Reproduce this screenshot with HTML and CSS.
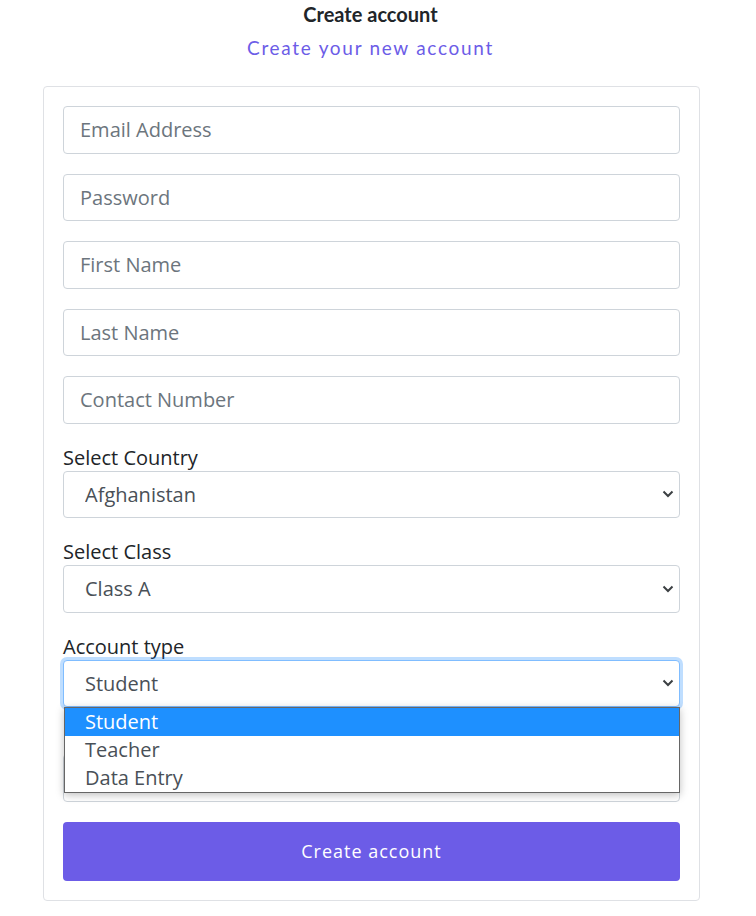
FILE: index.html
```html
<!DOCTYPE html>
<html lang="en">

<head>
    <meta charset="UTF-8">
    <meta name="viewport" content="width=device-width, initial-scale=1.0">
    <title>Create account</title>
    <link rel="stylesheet" href="styles.css">
</head>

<body>
    <div class="page">
        <h4 class="title">Create account</h4>
        <p class="subtitle">Create your new account</p>

        <form class="card">
            <input class="field" type="email" placeholder="Email Address">
            <input class="field" type="password" placeholder="Password">
            <input class="field" type="text" placeholder="First Name">
            <input class="field" type="text" placeholder="Last Name">
            <input class="field" type="text" placeholder="Contact Number">

            <div class="group">
                <label class="label">Select Country</label>
                <div class="select-wrap">
                    <select class="field select">
                        <option>Afghanistan</option>
                    </select>
                    <svg class="chevron" viewBox="0 0 12 8"><path d="M1.5 1.5l4.5 4.5 4.5-4.5" /></svg>
                </div>
            </div>

            <div class="group">
                <label class="label">Select Class</label>
                <div class="select-wrap">
                    <select class="field select">
                        <option>Class A</option>
                    </select>
                    <svg class="chevron" viewBox="0 0 12 8"><path d="M1.5 1.5l4.5 4.5 4.5-4.5" /></svg>
                </div>
            </div>

            <div class="group">
                <label class="label">Account type</label>
                <div class="select-wrap">
                    <select class="field select focus">
                        <option>Student</option>
                        <option>Teacher</option>
                        <option>Data Entry</option>
                    </select>
                    <svg class="chevron" viewBox="0 0 12 8"><path d="M1.5 1.5l4.5 4.5 4.5-4.5" /></svg>
                    <!-- open list of the select -->
                    <ul class="dropdown">
                        <li class="active">Student</li>
                        <li>Teacher</li>
                        <li>Data Entry</li>
                    </ul>
                </div>
            </div>

            <!-- covered by the open list -->
            <div class="group">
                <label class="label">&nbsp;</label>
                <div class="select-wrap">
                    <select class="field select"></select>
                </div>
            </div>

            <button class="btn" type="button">Create account</button>
        </form>
    </div>
</body>

</html>
```

FILE: styles.css
```css
body {
    margin: 0;
    background: #fff;
}

.page {
    width: 741px;
}

.title {
    margin: 2px 0 0;
    font-family: Lato, sans-serif;
    font-weight: bold;
    font-size: 20px;
    line-height: 24px;
    color: #212529;
    text-align: center;
}

.subtitle {
    margin: 10px 0 26px;
    font-family: Lato, sans-serif;
    font-size: 19px;
    line-height: 24px;
    letter-spacing: 1.7px;
    color: #6c5ce7;
    text-align: center;
}

.card {
    display: flex;
    flex-direction: column;
    gap: 20px;
    width: 657px;
    box-sizing: border-box;
    margin-left: 43px;
    padding: 19px;
    border: 1px solid #dfe1e5;
    border-radius: 4px;
    font-family: "Open Sans", sans-serif;
}

.field {
    display: block;
    width: 100%;
    height: 47.5px;
    box-sizing: border-box;
    margin: 0;
    padding: 8px 16px;
    border: 1px solid #ced4da;
    border-radius: 4px;
    background: #fff;
    font-family: "Open Sans", sans-serif;
    font-size: 20px;
    color: #495057;
    outline: none;
}

.field::placeholder {
    color: #6c757d;
}

.select {
    appearance: none;
    -webkit-appearance: none;
    padding-left: 21px;
}

.label {
    display: block;
    font-size: 20px;
    line-height: 27px;
    color: #212529;
}

.select-wrap {
    position: relative;
}

.chevron {
    position: absolute;
    top: 50%;
    right: 6px;
    width: 12px;
    height: 8px;
    margin-top: -4px;
    fill: none;
    stroke: #3c4043;
    stroke-width: 2;
    pointer-events: none;
}

.focus {
    border-color: #80bdff;
    box-shadow: 0 0 0 3px rgba(0, 123, 255, 0.25);
}

.dropdown {
    position: absolute;
    top: 100%;
    left: 1px;
    right: 0;
    z-index: 2;
    margin: 0;
    padding: 0;
    list-style: none;
    background: #fff;
    border: 1px solid #666;
    box-shadow: 0 2px 8px rgba(0, 0, 0, 0.25);
    font-size: 20px;
    color: #495057;
}

.dropdown li {
    height: 28px;
    line-height: 28px;
    padding-left: 20px;
}

.dropdown .active {
    background: #1e90ff;
    color: #fff;
}

.btn {
    height: 59px;
    border: 0;
    border-radius: 4px;
    background: #6c5ce7;
    color: #fff;
    font-family: "Open Sans", sans-serif;
    font-size: 18px;
    letter-spacing: 1px;
}
```
